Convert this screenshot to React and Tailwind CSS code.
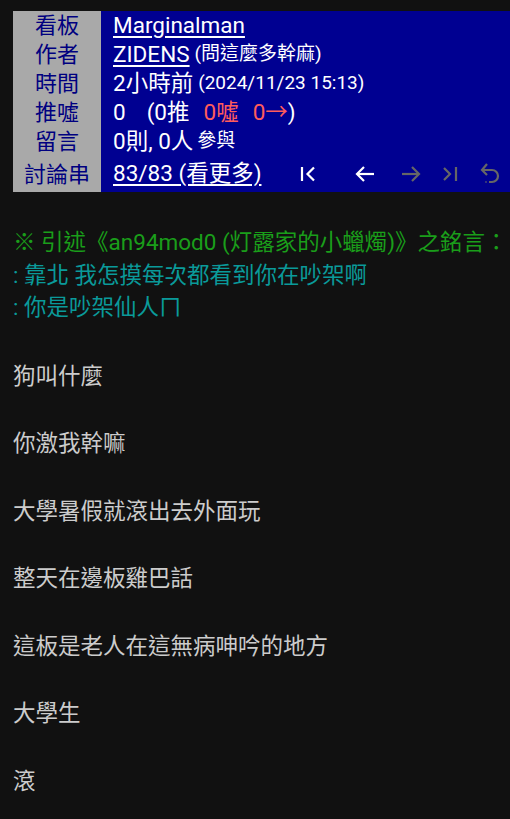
import React from "react";

const labels = ["看板", "作者", "時間", "推噓", "留言", "討論串"];

const FirstIcon = () => (
  <svg width="16" height="16" viewBox="0 0 16 16" fill="none" stroke="#fff" strokeWidth="2.2">
    <path d="M2 1v14" />
    <path d="M14 1.5 7.5 8l6.5 6.5" />
  </svg>
);

const PrevIcon = ({ color }) => (
  <svg width="20" height="20" viewBox="0 0 20 20" fill="none" stroke={color} strokeWidth="2.2">
    <path d="M19 10H2" />
    <path d="M9 3 2 10l7 7" />
  </svg>
);

const NextIcon = ({ color }) => (
  <svg width="20" height="20" viewBox="0 0 20 20" fill="none" stroke={color} strokeWidth="2.2">
    <path d="M1 10h17" />
    <path d="M11 3l7 7-7 7" />
  </svg>
);

const LastIcon = () => (
  <svg width="16" height="16" viewBox="0 0 16 16" fill="none" stroke="#666" strokeWidth="2.2">
    <path d="M2 2l6 6-6 6" />
    <path d="M14 1v14" />
  </svg>
);

const UndoIcon = () => (
  <svg width="20" height="24" viewBox="0 0 20 24" fill="none" stroke="#666" strokeWidth="2.2">
    <path d="M7 2 2 8l5 5" />
    <path d="M2 8h10a6 6 0 0 1 0 12H9" />
    <path d="M5.5 20h1" />
  </svg>
);

const quote = [
  ": 靠北 我怎摸每次都看到你在吵架啊",
  ": 你是吵架仙人ㄇ",
];

const lines = [
  "狗叫什麼",
  "你激我幹嘛",
  "大學暑假就滾出去外面玩",
  "整天在邊板雞巴話",
  "這板是老人在這無病呻吟的地方",
  "大學生",
  "滾",
];

export default function App() {
  return (
    <div className="min-h-[819px] overflow-hidden bg-[#111111] pt-[11px] font-['Roboto','Noto_Sans_CJK_TC',sans-serif]">
      {/* article meta */}
      <div className="ml-[13px] flex bg-[#000091]">
        <div className="w-[88px] shrink-0 bg-[#a9a9a9] text-[22px] text-[#000080]">
          {labels.map((l, i) => (
            <div
              key={l}
              className={`flex items-center justify-center ${i === 5 ? "h-[36px]" : "h-[29px]"}`}
            >
              {l}
            </div>
          ))}
        </div>
        <div className="flex-1 pl-[12px] text-[22.5px] text-white">
          <div className="flex h-[29px] items-center">
            <span className="underline underline-offset-[3px]">Marginalman</span>
          </div>
          <div className="flex h-[29px] items-center">
            <span className="underline underline-offset-[3px]">ZIDENS</span>
            <span className="ml-[5px] text-[19px]">(問這麼多幹麻)</span>
          </div>
          <div className="flex h-[29px] items-center">
            <span>2小時前</span>
            <span className="ml-[5px] text-[19px]">(2024/11/23 15:13)</span>
          </div>
          <div className="flex h-[29px] items-center whitespace-pre">
            <span>0</span>
            <span className="ml-[21px]">(0推</span>
            <span className="ml-[14px] text-[#ff5c5c]">0噓</span>
            <span className="ml-[14px] text-[#ff5c5c]">0→</span>
            <span>)</span>
          </div>
          <div className="flex h-[29px] items-center">
            <span>0則, 0人</span>
            <span className="ml-[4px] text-[19px]">參與</span>
          </div>
          <div className="flex h-[36px] items-center">
            <span className="underline underline-offset-[3px]">83/83 (看更多)</span>
            <div className="ml-[39px] flex items-center">
              <FirstIcon />
              <div className="ml-[39px]">
                <PrevIcon color="#fff" />
              </div>
              <div className="ml-[26px]">
                <NextIcon color="#666" />
              </div>
              <div className="ml-[21px]">
                <LastIcon />
              </div>
              <div className="ml-[22px]">
                <UndoIcon />
              </div>
            </div>
          </div>
        </div>
      </div>

      {/* article body */}
      <div className="pl-[13px] pt-[34px] text-[22.5px] text-[#cccccc]">
        <div className="whitespace-nowrap leading-[32.5px] text-[#1a9e1a]">※ 引述《an94mod0 (灯露家的小蠟燭)》之銘言：</div>
        {quote.map((q) => (
          <div key={q} className="leading-[32.5px] text-[#0a9a9a]">
            {q}
          </div>
        ))}
        {lines.map((t, i) => (
          <div key={t} className={`${i === 0 ? "pt-[36px]" : "pt-[33.75px]"} leading-[33.75px]`}>
            {t}
          </div>
        ))}
      </div>
    </div>
  );
}
